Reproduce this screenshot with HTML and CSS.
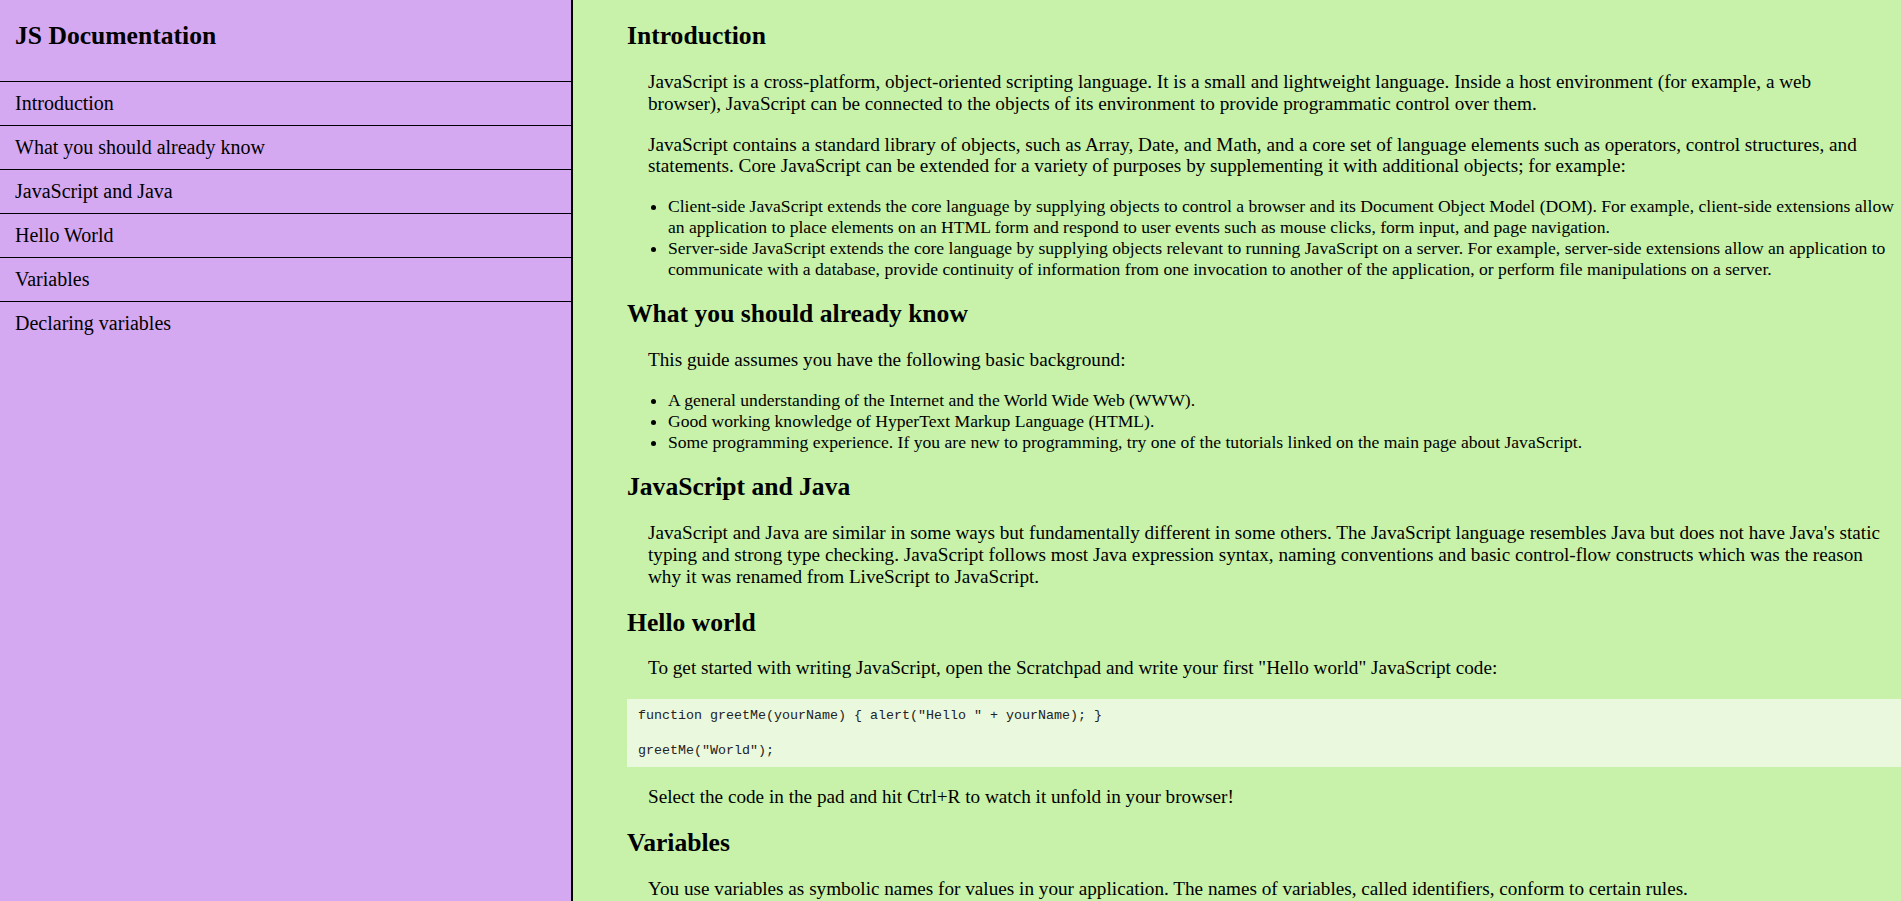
FILE: index.html
```html
<!DOCTYPE html>
<html lang="en">
<head>
<meta charset="utf-8">
<title>JS Documentation</title>
<link rel="stylesheet" href="styles.css">
</head>
<body>
<div class="page">
  <nav class="navbar" id="navbar">
    <header class="nav-header">JS Documentation</header>
    <ul class="nav-list">
      <li><a class="nav-link" href="#Introduction">Introduction</a></li>
      <li><a class="nav-link" href="#What_you_should_already_know">What you should already know</a></li>
      <li><a class="nav-link" href="#JavaScript_and_Java">JavaScript and Java</a></li>
      <li><a class="nav-link" href="#Hello_World">Hello World</a></li>
      <li><a class="nav-link" href="#Variables">Variables</a></li>
      <li><a class="nav-link" href="#Declaring_variables">Declaring variables</a></li>
    </ul>
  </nav>
  <main class="main-doc" id="main-doc">
    <section class="main-section" id="Introduction">
      <h2 class="section-title">Introduction</h2>
      <p class="text">JavaScript is a cross-platform, object-oriented scripting language. It is a small and lightweight language. Inside a host environment (for example, a web browser), JavaScript can be connected to the objects of its environment to provide programmatic control over them.</p>
      <p class="text">JavaScript contains a standard library of objects, such as Array, Date, and Math, and a core set of language elements such as operators, control structures, and statements. Core JavaScript can be extended for a variety of purposes by supplementing it with additional objects; for example:</p>
      <ul class="bullets">
        <li>Client-side JavaScript extends the core language by supplying objects to control a browser and its Document Object Model (DOM). For example, client-side extensions allow an application to place elements on an HTML form and respond to user events such as mouse clicks, form input, and page navigation.</li>
        <li>Server-side JavaScript extends the core language by supplying objects relevant to running JavaScript on a server. For example, server-side extensions allow an application to communicate with a database, provide continuity of information from one invocation to another of the application, or perform file manipulations on a server.</li>
      </ul>
    </section>
    <section class="main-section" id="What_you_should_already_know">
      <h2 class="section-title">What you should already know</h2>
      <p class="text">This guide assumes you have the following basic background:</p>
      <ul class="bullets">
        <li>A general understanding of the Internet and the World Wide Web (WWW).</li>
        <li>Good working knowledge of HyperText Markup Language (HTML).</li>
        <li>Some programming experience. If you are new to programming, try one of the tutorials linked on the main page about JavaScript.</li>
      </ul>
    </section>
    <section class="main-section" id="JavaScript_and_Java">
      <h2 class="section-title">JavaScript and Java</h2>
      <p class="text">JavaScript and Java are similar in some ways but fundamentally different in some others. The JavaScript language resembles Java but does not have Java's static typing and strong type checking. JavaScript follows most Java expression syntax, naming conventions and basic control-flow constructs which was the reason why it was renamed from LiveScript to JavaScript.</p>
    </section>
    <section class="main-section" id="Hello_World">
      <h2 class="section-title">Hello world</h2>
      <p class="text">To get started with writing JavaScript, open the Scratchpad and write your first "Hello world" JavaScript code:</p>
<pre class="code"><code>function greetMe(yourName) { alert("Hello " + yourName); }

greetMe("World");</code></pre>
      <p class="text">Select the code in the pad and hit Ctrl+R to watch it unfold in your browser!</p>
    </section>
    <section class="main-section" id="Variables">
      <h2 class="section-title">Variables</h2>
      <p class="text">You use variables as symbolic names for values in your application. The names of variables, called identifiers, conform to certain rules.</p>
      <p class="text">A JavaScript identifier must start with a letter, underscore (_), or dollar sign ($); subsequent characters can also be digits (0-9). Because JavaScript is case sensitive, letters include the characters "A" through "Z" (uppercase) and the characters "a" through "z" (lowercase).</p>
    </section>
    <section class="main-section" id="Declaring_variables">
      <h2 class="section-title">Declaring variables</h2>
      <p class="text">You can declare a variable in three ways:</p>
      <p class="text">With the keyword var. For example, var x = 42. This syntax can be used to declare both local and global variables.</p>
    </section>
  </main>
</div>
</body>
</html>
```
FILE: styles.css
```css
* {
  box-sizing: border-box;
}

html,
body {
  margin: 0;
  height: 100%;
}

body {
  font-family: "Liberation Serif", "Times New Roman", serif;
  color: #000;
  background: #c8f2aa;
}

.page {
  display: flex;
  height: 100vh;
  overflow: hidden;
}

.navbar {
  flex: 0 0 573px;
  height: 100vh;
  background: #d5a9f2;
  border-right: 2px solid #000;
}

.nav-header {
  display: block;
  padding: 20.5px 15px 31.1px;
  font-size: 25.6px;
  line-height: 29.4px;
  font-weight: bold;
  border-bottom: 1px solid #000;
}

.nav-list {
  list-style: none;
  margin: 0;
  padding: 0;
}

.nav-list li {
  border-bottom: 1px solid #000;
}

.nav-list li:last-child {
  border-bottom: none;
}

.nav-link {
  display: block;
  padding: 10px 15px;
  font-size: 20px;
  line-height: 23px;
  color: #000;
  text-decoration: none;
}

.main-doc {
  flex: 1 1 auto;
  height: 100vh;
  padding-left: 54px;
  overflow-y: auto;
  scrollbar-width: none;
}

.main-doc::-webkit-scrollbar {
  display: none;
}

.section-title {
  margin: 20px 0 20.5px;
  font-size: 25.6px;
  line-height: 29.4px;
  font-weight: bold;
}

.main-section:first-child .section-title {
  margin-top: 21px;
}

.text {
  margin: 19.2px 0;
  padding: 0 15px 0 21px;
  font-size: 19.2px;
  line-height: 21.8px;
}

.bullets {
  margin: 19px 0;
  padding-left: 41px;
  font-size: 17.6px;
  line-height: 20.7px;
}

.code {
  margin: 19.5px 0 19px;
  padding: 8px 11px;
  background: #eaf8de;
  font-family: "Liberation Mono", "Courier New", monospace;
  font-size: 13.33px;
  line-height: 17.5px;
  color: #222;
}

.code code {
  font-family: inherit;
  font-size: inherit;
}
```
